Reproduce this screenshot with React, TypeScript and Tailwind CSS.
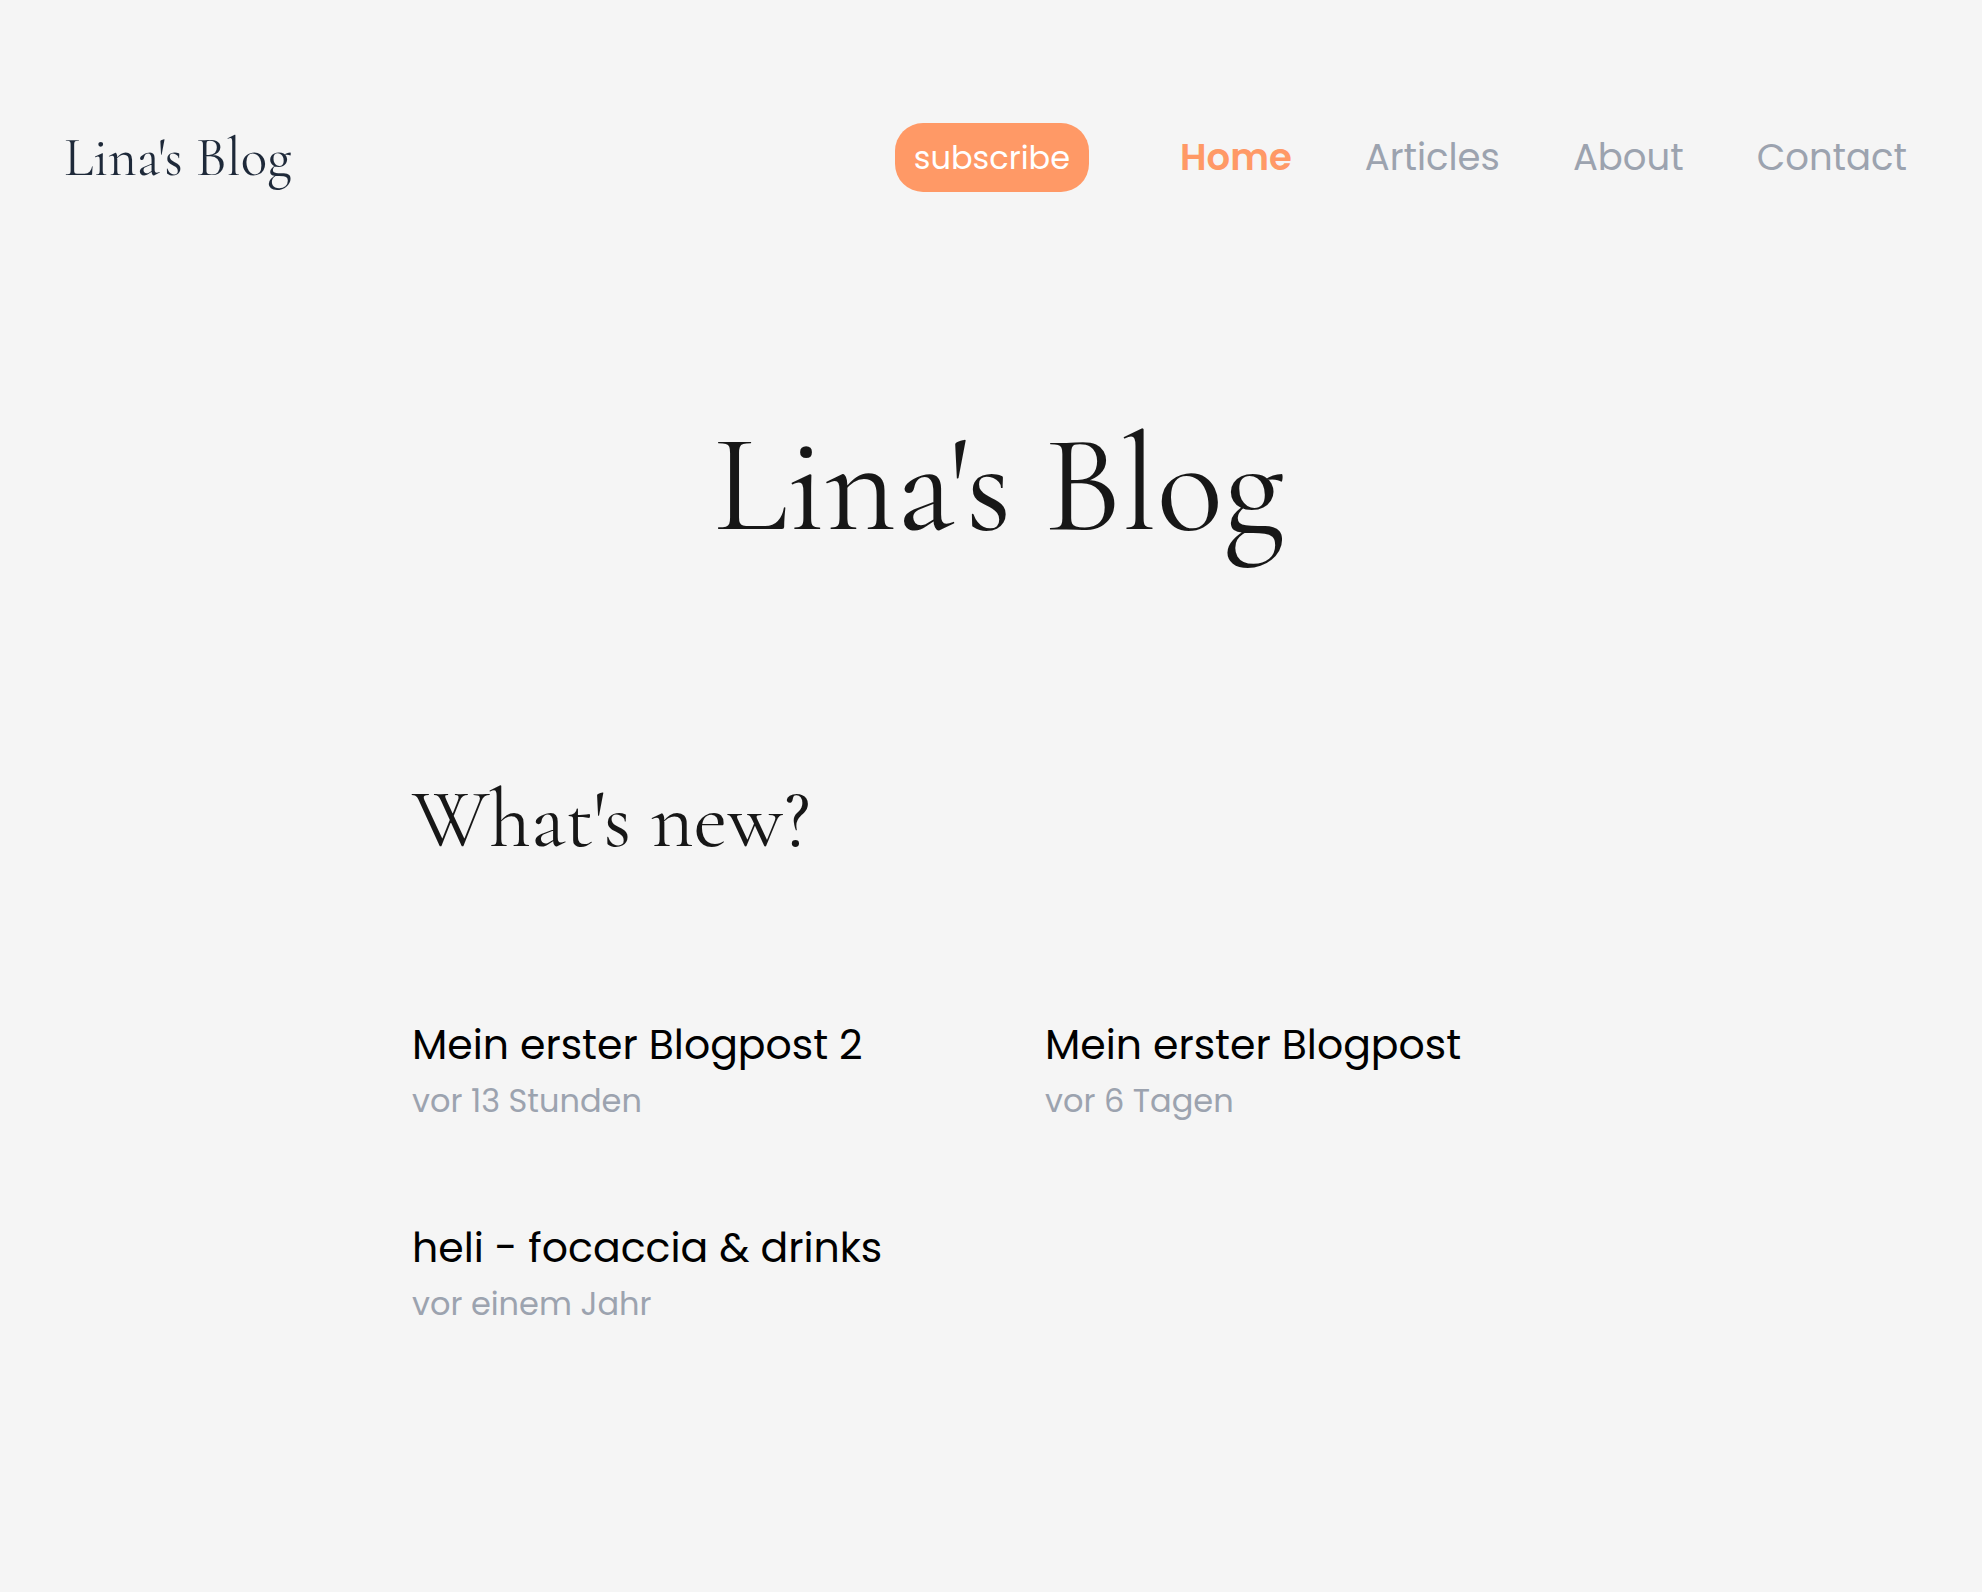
const links = ["Articles", "About", "Contact"];

const posts = [
  { title: "Mein erster Blogpost 2", date: "vor 13 Stunden" },
  { title: "Mein erster Blogpost", date: "vor 6 Tagen" },
  { title: "heli - focaccia & drinks", date: "vor einem Jahr" },
];

export default function App() {
  return (
    <div className="min-h-screen bg-[#f5f5f5] font-['Poppins','Open_Sans',sans-serif]">
      <header className="flex items-center justify-between pt-[121px] pr-[75px] pl-16">
        <a href="#" className="pt-[2px] font-['Cormorant_Garamond','Liberation_Serif',serif] text-[55px] leading-[70px] text-gray-800">
          Lina's Blog
        </a>
        <nav className="flex items-center text-[37px] leading-[56px] text-[#9ca3af]">
          <button className="mr-[91px] rounded-[28px] bg-[#ff9966] px-[19px] py-[6px] text-[32px] leading-[57px] text-white">
            subscribe
          </button>
          <div className="flex gap-[73px]">
            <a href="#" className="font-semibold text-[#ff9966]">Home</a>
            {links.map((label) => (
              <a key={label} href="#">{label}</a>
            ))}
          </div>
        </nav>
      </header>
      <main>
        <h1 className="mt-[212px] pl-4 text-center font-['Cormorant_Garamond','Liberation_Serif',serif] text-[138px] leading-[160px] text-[#171717]">
          Lina's Blog
        </h1>
        <section className="mx-auto w-2/3 max-w-[1158px]">
          <h2 className="mt-[205px] font-['Cormorant_Garamond','Liberation_Serif',serif] text-[83px] leading-[100px] text-[#171717]">
            What's new?
          </h2>
          <div className="mt-[143px] grid grid-cols-2 gap-x-[108px] gap-y-[91px]">
            {posts.map((post) => (
              <article key={post.title} className="whitespace-nowrap">
                <h3 className="text-[41px] leading-[64px] text-black">
                  <a href="#">{post.title}</a>
                </h3>
                <p className="text-[32px] leading-[48px] text-[#9ca3af]">{post.date}</p>
              </article>
            ))}
          </div>
        </section>
      </main>
    </div>
  );
}
